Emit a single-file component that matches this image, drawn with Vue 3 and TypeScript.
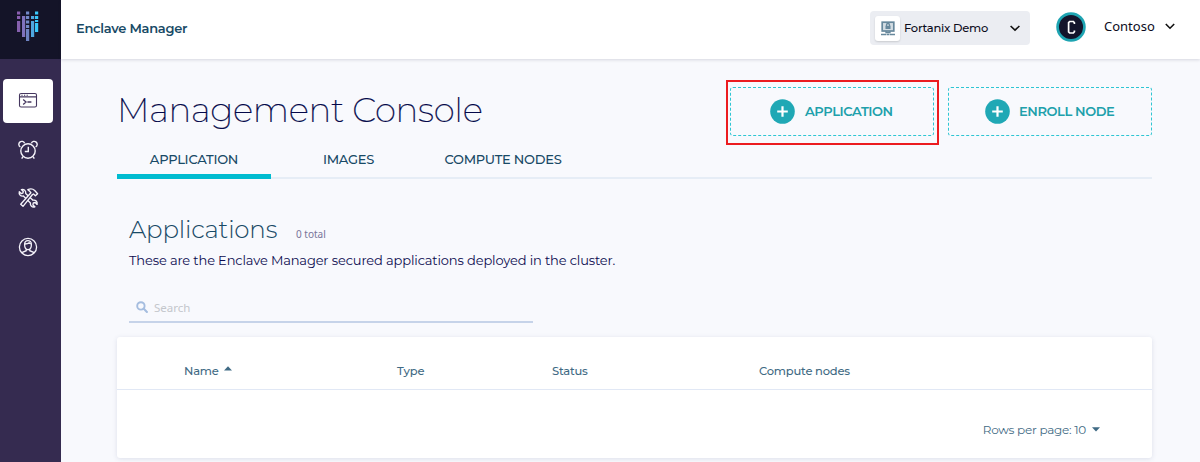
<script setup lang="ts">
const tabs: { label: string; cls: string }[] = [
  { label: 'APPLICATION', cls: 'tab-app active' },
  { label: 'IMAGES', cls: 'tab-img' },
  { label: 'COMPUTE NODES', cls: 'tab-nodes' },
]
const actions: { label: string; cls: string }[] = [
  { label: 'APPLICATION', cls: 'highlighted' },
  { label: 'ENROLL NODE', cls: 'enroll' },
]
const bars: { x: number; y: number; h: number; c: string }[] = [
  { x: 17, y: 11.5, h: 3, c: '#8a5fb0' }, { x: 17, y: 16, h: 3, c: '#8a5fb0' }, { x: 17, y: 21, h: 11, c: '#8560ad' },
  { x: 22, y: 16, h: 21, c: '#7f72bd' },
  { x: 26, y: 11.5, h: 3, c: '#7288c6' }, { x: 26, y: 16, h: 3, c: '#7288c6' }, { x: 26, y: 20.5, h: 3, c: '#7288c6' },
  { x: 26, y: 25, h: 3, c: '#7288c6' }, { x: 26, y: 29, h: 12, c: '#6e83c2' },
  { x: 31, y: 16, h: 3, c: '#50a7df' }, { x: 31, y: 21, h: 16, c: '#50a7df' },
  { x: 35, y: 11.5, h: 3, c: '#39c8fa' }, { x: 35, y: 16, h: 3, c: '#39c8fa' }, { x: 35, y: 20, h: 2, c: '#39c8fa' }, { x: 35, y: 23, h: 9, c: '#39c8fa' },
]
</script>

<template>
  <div class="page">
    <aside class="side">
      <div class="logo">
        <svg width="61" height="59" viewBox="0 0 61 59">
          <rect v-for="(b, i) in bars" :key="i" :x="b.x" :y="b.y" width="3.2" :height="b.h" :fill="b.c" />
        </svg>
      </div>
      <nav class="nav">
        <a class="nav-item selected">
          <svg width="20" height="16" viewBox="0 0 20 16" fill="none" stroke="#45375f">
            <rect x="1.5" y="1.5" width="17" height="13.5" rx="1.6" stroke-width="1.1" />
            <path d="M1.5 4.9h17M3.4 3.2h1.2M6 3.2h1.2M8.6 3.2h1.2" stroke-width="1.1" />
            <path d="M5.2 7.6l2.8 2.4-2.8 2.4M9.4 10h4" stroke-width="1.3" />
          </svg>
        </a>
        <a class="nav-item">
          <svg width="20" height="20" viewBox="0 0 20 20" fill="none" stroke="#f5f3fa" stroke-width="1.4">
            <circle cx="10" cy="11" r="7.2" />
            <path d="M10.3 6.8v4.7H6.8M5 16.7l-1.3 2M15 16.7l1.3 2M2.4 7A3 3 0 1 1 6.6 3.2M13.4 3.2A3 3 0 1 1 17.6 7" />
          </svg>
        </a>
        <a class="nav-item">
          <svg width="22" height="22" viewBox="0 0 22 22" fill="none" stroke="#f5f3fa" stroke-width="1.35" stroke-linejoin="round">
            <path d="M4.4 2.6l1.9 1.9-.4 1.7-1.7.4-1.9-1.9c-.7 2.8 1.4 4.9 4.1 4.3l7 7c-.5 2.8 1.8 4.7 4.5 3.8l-2-1.9.4-1.9 1.9-.5 1.9 1.9c.6-2.9-1.6-4.8-4.1-4.2L8.7 6.4c.4-2.7-1.7-4.5-4.3-3.8z" />
            <path d="M10.8 2.7c2.8-1.3 5.2-.8 6.9.8l2.9 3.2-2.2 2.1-1.9-1.8-1 .5L6 19.3l-2.3-2.1L13.9 5.7l-1.3-1.6z" fill="#352b50" />
          </svg>
        </a>
        <a class="nav-item user-item">
          <svg width="20" height="20" viewBox="0 0 20 20" fill="none" stroke="#f5f3fa" stroke-width="1.3">
            <circle cx="10" cy="10" r="8.6" />
            <path d="M6.6 7.5c0-5.2 6.8-5.2 6.8 0 0 6.8-6.8 6.8-6.8 0zM7 7c2.3 0 3.5-.6 4.2-1.3.5.9 1.2 1.2 2.1 1.3M8.2 12v1.7L3.8 15.6M11.8 12v1.7l4.4 1.9" />
          </svg>
        </a>
      </nav>
    </aside>

    <div class="body">
      <header class="top">
        <span class="brand"><span class="t">Enclave Manager</span></span>
        <div class="account">
          <span class="account-icon">
            <svg width="14" height="15" viewBox="0 0 14 15" fill="none" stroke="#67889c">
              <rect x="1.2" y="1.2" width="11.6" height="8.8" stroke-width="1.7" fill="#d3dde3" />
              <rect x="4.5" y="4.8" width="5" height="3.2" fill="#67889c" stroke="none" />
              <path d="M5.5 5.2V4a1.5 1.5 0 0 1 3 0v1.2M5 10v1.5h4V10M0 13.5h5M9 13.5h5M5.5 13.5h3" stroke-width="1.3" />
            </svg>
          </span>
          <span class="account-name t">Fortanix Demo</span>
          <svg class="chev" width="10" height="7" viewBox="0 0 10 7"><path d="M.6 1l4.4 4.2L9.4 1" fill="none" stroke="#111" stroke-width="1.6" /></svg>
        </div>
        <span class="avatar">
          <svg width="30" height="30" viewBox="0 0 30 30">
            <circle cx="15" cy="15" r="13.4" fill="#13142b" stroke="#1ea4b2" stroke-width="2.7" />
            <path d="M18.4 12v-1.3l-1-1.2h-3.7l-1.1 1.2v9.1l1.1 1.2h3.7l1-1.2v-1.3" fill="none" stroke="#fff" stroke-width="1.7" />
          </svg>
        </span>
        <span class="user t">Contoso</span>
        <svg class="chev2" width="10" height="7" viewBox="0 0 10 7"><path d="M.8 1l4.2 4.2L9.2 1" fill="none" stroke="#111" stroke-width="1.6" /></svg>
      </header>

      <main class="main">
        <div class="head">
          <h1><span class="t">Management Console</span></h1>
          <div class="actions">
            <div v-for="a in actions" :key="a.label" class="frame" :class="a.cls">
              <button class="action">
                <svg width="25" height="25" viewBox="0 0 25 25"><circle cx="12.5" cy="12.5" r="12.3" fill="#20a8b5" /><path d="M12.5 7.2v10.6M7.2 12.5h10.6" stroke="#fff" stroke-width="2.2" /></svg>
                <span class="t">{{ a.label }}</span>
              </button>
            </div>
          </div>
        </div>
        <div class="tabs">
          <div v-for="t in tabs" :key="t.label" class="tab" :class="t.cls"><span class="t">{{ t.label }}</span></div>
        </div>
        <section class="intro">
          <div class="title"><h2 class="t">Applications</h2><span class="count t">0 total</span></div>
          <p><span class="t">These are the Enclave Manager secured applications deployed in the cluster.</span></p>
          <div class="search">
            <svg width="12" height="12" viewBox="0 0 12 12"><circle cx="4.9" cy="4.9" r="3.7" fill="none" stroke="#a5bddf" stroke-width="1.9" /><path d="M7.6 7.6l3.3 3.3" stroke="#a5bddf" stroke-width="2.1" stroke-linecap="round" /></svg>
            <span class="t">Search</span>
          </div>
        </section>
        <section class="card">
          <div class="thead">
            <span class="c1"><span class="t">Name</span><svg width="8" height="5" viewBox="0 0 8 5"><path d="M0 4.5L4 .3l4 4.2z" fill="#3f6a84" /></svg></span>
            <span class="c2"><span class="t">Type</span></span>
            <span class="c3"><span class="t">Status</span></span>
            <span class="c4"><span class="t">Compute nodes</span></span>
          </div>
          <div class="pager"><span class="t">Rows per page: 10</span><svg width="8" height="5" viewBox="0 0 8 5"><path d="M0 .3h8L4 4.6z" fill="#3f6a84" /></svg></div>
        </section>
      </main>
    </div>
  </div>
</template>

<style>
body { margin: 0; overflow: hidden; }
</style>
<style scoped>
* { box-sizing: border-box; }
.page { display: flex; width: 1200px; height: 462px; overflow: hidden; background: #f8f9fd; font-family: Montserrat, Inter, "Open Sans", sans-serif; }
.t { white-space: nowrap; }
svg { display: block; flex: none; }
.side { width: 61px; flex: none; background: #352b50; }
.logo { height: 59px; background: #141428; }
.nav { display: flex; flex-direction: column; padding: 20px 0 0 3px; }
.nav-item { width: 50px; height: 48px; display: flex; align-items: center; justify-content: center; padding-bottom: 2px; }
.selected { height: 44px; margin-bottom: 4px; background: #fff; border-radius: 4px; }
.user-item { padding-bottom: 0; }
.body { flex: 1; min-width: 0; }
.top { height: 59px; background: #fff; box-shadow: 0 1px 3px rgba(40, 40, 70, .16); display: flex; align-items: center; padding: 0 25px 3px 15px; }
.brand { flex: 1; color: #184a66; font-size: 13px; font-weight: 600; letter-spacing: -.27px; }
.account { width: 160px; height: 34px; border-radius: 4px; background: #ebedf2; display: flex; align-items: center; padding: 0 10px 0 5px; }
.account-icon { width: 25px; height: 25px; border-radius: 3px; background: #fff; box-shadow: 0 1px 2px rgba(0, 0, 0, .15); display: flex; align-items: center; justify-content: center; }
.account-name { margin-left: 4px; flex: 1; font-size: 11.5px; letter-spacing: -.25px; color: #0b0c1c; font-weight: 500; }
.avatar { margin: -3px 0 0 26px; }
.user { margin: -4px 0 0 18px; width: 52px; font-family: "Noto Sans", sans-serif; font-size: 13px; color: #0b0c1c; }
.chev2 { margin: -3px 0 0 9px; }
.main { padding: 20px 48px 0 56px; }
.head { display: flex; height: 66px; justify-content: space-between; }
h1 { margin: 9px 0 0; line-height: 44px; font-size: 34px; font-weight: 200; letter-spacing: -.32px; color: #04084a; -webkit-text-stroke: .2px #04084a; }
.actions { display: flex; }
.frame { padding: 5px 3px 5px 2px; height: 65px; border: 2px solid transparent; margin-top: 1px; }
.highlighted { border-color: #ec1c20; width: 213px; }
.enroll { width: 209px; padding-left: 3px; padding-right: 0; border-right: 0; margin-left: 4px; }
.action { width: 100%; height: 49px; border: 1px dashed #2ec6d3; border-radius: 3px; background: transparent; display: flex; align-items: center; padding: 0 0 0 39px; gap: 10px; font: 600 13px Montserrat, Inter, sans-serif; letter-spacing: -.4px; color: #20a0ab; }
.action .t { margin-bottom: 2px; }
.enroll .action { padding-left: 36px; gap: 9px; }
.tabs { display: flex; height: 34px; border-bottom: 2px solid #e6edf6; }
.tab { height: 34px; padding-top: 4px; color: #184a66; font-size: 13px; font-weight: 500; letter-spacing: -.25px; line-height: 20px; text-align: center; }
.tab-app { width: 154px; }
.tab-img { width: 155px; }
.tab-nodes { width: 154px; }
.active { border-bottom: 5px solid #00bcd0; }
.intro { padding: 32px 0 0 12px; height: 158px; }
.title { display: flex; align-items: baseline; height: 36px; line-height: 36px; }
h2 { margin: 0; width: 167px; font-size: 24.5px; font-weight: 350; letter-spacing: -.2px; color: #184a66; }
.count { font: 10px "Noto Sans", sans-serif; color: #79759a; }
p { margin: 3px 0 0; font-size: 13px; line-height: 20px; letter-spacing: -.135px; color: #0c0c50; }
.search { width: 404px; height: 30px; margin-top: 23px; border-bottom: 2px solid #c6d3e9; display: flex; align-items: center; padding-left: 7px; gap: 6px; font: 11.5px "Noto Sans", sans-serif; color: #c4c7cc; }
.card { width: 1035px; height: 121px; border-radius: 3px; background: #fff; box-shadow: 0 1px 5px rgba(60, 70, 120, .14); }
.thead { height: 53px; border-bottom: 1px solid #e1e8f5; padding: 15px 0 0 67px; display: grid; grid-template-columns: 213px 155px 207px 1fr; align-items: center; font-size: 11.5px; letter-spacing: -.2px; font-weight: 500; color: #3f6a84; }
.c1 { display: flex; align-items: center; gap: 5px; }
.c1 svg { margin-bottom: 5px; }
.pager { display: flex; align-items: center; justify-content: flex-end; gap: 6px; height: 79px; padding: 0 52px 1px 0; font-size: 12px; letter-spacing: -.25px; color: #3f6a84; }
</style>
